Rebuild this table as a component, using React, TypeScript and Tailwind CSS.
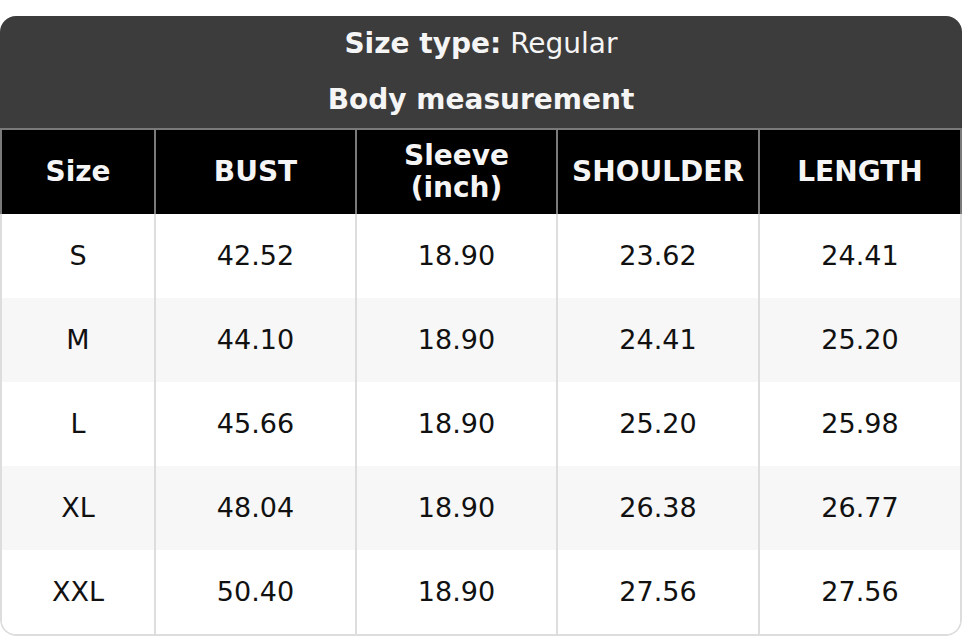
const cols = ["Size", "BUST", "Sleeve\n(inch)", "SHOULDER", "LENGTH"]

const rows = [
  ["S", "42.52", "18.90", "23.62", "24.41"],
  ["M", "44.10", "18.90", "24.41", "25.20"],
  ["L", "45.66", "18.90", "25.20", "25.98"],
  ["XL", "48.04", "18.90", "26.38", "26.77"],
  ["XXL", "50.40", "18.90", "27.56", "27.56"],
]

const grid = "grid grid-cols-[154px_201px_201px_202px_1fr]"

export default function App() {
  return (
    <div className="w-[962px] h-[636px] bg-white pt-4 font-['DejaVu_Sans',sans-serif] text-[27px]">
      <div className="rounded-[16px] overflow-hidden">
        <div className="bg-[#3c3c3c] text-[#f5f5f5] text-[28px] border-b-2 border-[#7a7a7a]">
          <div className="h-[56px] flex items-center justify-center">
            <span className="font-bold">Size type:</span>
            <span className="ml-[9px]">Regular</span>
          </div>
          <div className="h-[56px] flex items-center justify-center font-bold">Body measurement</div>
        </div>
        <div className={`${grid} h-[84px] bg-black text-[#f5f5f5] text-[28px] font-bold border-x-2 border-[#7a7a7a]`}>
          {cols.map((c, i) => (
            <div
              key={c}
              className={`flex items-center justify-center text-center leading-[32px] whitespace-pre-line ${i < cols.length - 1 ? "border-r-2 border-[#7a7a7a]" : ""}`}
            >
              {c}
            </div>
          ))}
        </div>
        <div className="border-x-2 border-b-2 border-[#dddddd] rounded-b-[16px] overflow-hidden">
          {rows.map((r, ri) => (
            <div key={r[0]} className={`${grid} h-[84px] text-[#111] ${ri % 2 === 1 ? "bg-[#f7f7f7]" : "bg-white"}`}>
              {r.map((v, i) => (
                <div
                  key={i}
                  className={`flex items-center justify-center ${i < r.length - 1 ? "border-r-2 border-[#dddddd]" : ""}`}
                >
                  {v}
                </div>
              ))}
            </div>
          ))}
        </div>
      </div>
    </div>
  )
}
